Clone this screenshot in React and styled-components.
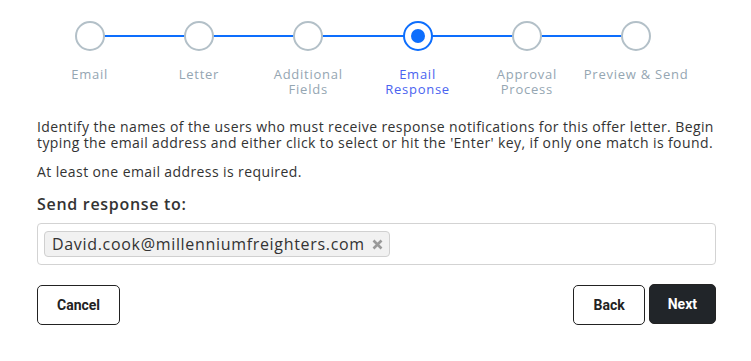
import React from 'react'
import styled, { createGlobalStyle } from 'styled-components'

const GlobalStyle = createGlobalStyle`
  body {
    margin: 0;
    background: #fff;
    font-family: "Open Sans", Roboto, sans-serif;
    color: #333;
  }
`

const steps = [
  { label: 'Email' },
  { label: 'Letter' },
  { label: 'Additional\nFields' },
  { label: 'Email\nResponse', active: true },
  { label: 'Approval\nProcess' },
  { label: 'Preview & Send' },
]

function CloseIcon() {
  return (
    <svg width="11" height="11" viewBox="0 0 11 11">
      <path d="M1.5 1.5 L9.5 9.5 M9.5 1.5 L1.5 9.5" stroke="#999" strokeWidth="2.6" strokeLinecap="butt" />
    </svg>
  )
}

function App() {
  return (
    <Page>
      <GlobalStyle />
      <Stepper>
        {steps.map((s, i) => (
          <Step key={s.label} first={i === 0} last={i === steps.length - 1}>
            <Circle active={s.active} />
            <StepLabel active={s.active}>{s.label}</StepLabel>
          </Step>
        ))}
      </Stepper>

      <Intro>
        Identify the names of the users who must receive response notifications for this offer letter. Begin
        typing the email address and either click to select or hit the 'Enter' key, if only one match is found.
      </Intro>
      <Note>At least one email address is required.</Note>
      <FieldLabel>Send response to:</FieldLabel>
      <TagInput>
        <Chip>
          David.cook@millenniumfreighters.com
          <Remove><CloseIcon /></Remove>
        </Chip>
      </TagInput>

      <Actions>
        <Button>Cancel</Button>
        <Right>
          <Button>Back</Button>
          <Button dark>Next</Button>
        </Right>
      </Actions>
    </Page>
  )
}

export default App

const Page = styled.div`
  width: 751px;
  height: 361px;
  box-sizing: border-box;
  padding: 21px 35px 0 37px;
`

const Stepper = styled.div`
  display: flex;
  margin-left: -2px;
`

const Step = styled.div`
  position: relative;
  width: 109.3px;
  display: flex;
  flex-direction: column;
  align-items: center;
  &::before {
    content: '';
    position: absolute;
    top: 14px;
    height: 2px;
    background: #0d6efd;
    left: ${p => (p.first ? '50%' : '0')};
    right: ${p => (p.last ? '50%' : '0')};
  }
`

const Circle = styled.div`
  position: relative;
  z-index: 1;
  width: 30px;
  height: 30px;
  box-sizing: border-box;
  border-radius: 50%;
  background: #fff;
  border: 2px solid ${p => (p.active ? '#0d6efd' : '#b3c0c8')};
  display: flex;
  align-items: center;
  justify-content: center;
  &::after {
    content: '';
    display: ${p => (p.active ? 'block' : 'none')};
    width: 14px;
    height: 14px;
    border-radius: 50%;
    background: #0d6efd;
  }
`

const StepLabel = styled.div`
  margin-top: 16px;
  font-size: 13px;
  line-height: 15px;
  text-align: center;
  white-space: pre-line;
  letter-spacing: 0.75px;
  color: ${p => (p.active ? '#4a63f0' : '#95a6b2')};
`

const Intro = styled.p`
  margin: 22px 0 0;
  font-size: 14px;
  line-height: 16px;
  letter-spacing: 0.4px;
  color: #333;
`

const Note = styled.p`
  margin: 13px 0 0;
  font-size: 14px;
  line-height: 16px;
  letter-spacing: 0.4px;
  color: #333;
`

const FieldLabel = styled.div`
  margin-top: 14px;
  font-size: 16px;
  font-weight: 600;
  letter-spacing: 0.7px;
  color: #333;
  line-height: 20px;
`

const TagInput = styled.div`
  margin-top: 9px;
  height: 42px;
  box-sizing: border-box;
  border: 1px solid #d3d3d3;
  border-radius: 4px;
  padding: 0 6px;
  display: flex;
  align-items: center;
`

const Chip = styled.span`
  display: inline-flex;
  align-items: center;
  height: 26px;
  box-sizing: border-box;
  padding: 0 6px 0 7px;
  background: #f1f1f1;
  border: 1px solid #d0d0d0;
  border-radius: 4px;
  font-size: 16px;
  color: #333;
  letter-spacing: 0.68px;
`

const Remove = styled.span`
  display: flex;
  margin-left: 7px;
`

const Actions = styled.div`
  margin-top: 20px;
  display: flex;
  justify-content: space-between;
`

const Right = styled.div`
  display: flex;
  gap: 4px;
`

const Button = styled.button`
  height: 40px;
  padding: 0 ${p => (p.dark ? '18px' : '19px')};
  border-radius: 5px;
  border: 1px solid #222;
  background: ${p => (p.dark ? '#212529' : '#fff')};
  color: ${p => (p.dark ? '#fff' : '#222')};
  font-family: Roboto, sans-serif;
  font-weight: 700;
  font-size: 14px;
  margin-top: ${p => (p.dark ? '-1px' : '0')};
`
